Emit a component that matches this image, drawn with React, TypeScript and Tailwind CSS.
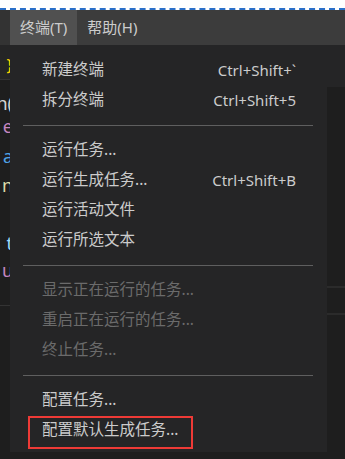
import React from "react";

type Item =
  | { type: "item"; label: string; shortcut?: string; disabled?: boolean; boxed?: boolean }
  | { type: "sep" };

const items: Item[] = [
  { type: "item", label: "新建终端", shortcut: "Ctrl+Shift+`" },
  { type: "item", label: "拆分终端", shortcut: "Ctrl+Shift+5" },
  { type: "sep" },
  { type: "item", label: "运行任务..." },
  { type: "item", label: "运行生成任务...", shortcut: "Ctrl+Shift+B" },
  { type: "item", label: "运行活动文件" },
  { type: "item", label: "运行所选文本" },
  { type: "sep" },
  { type: "item", label: "显示正在运行的任务...", disabled: true },
  { type: "item", label: "重启正在运行的任务...", disabled: true },
  { type: "item", label: "终止任务...", disabled: true },
  { type: "sep" },
  { type: "item", label: "配置任务..." },
  { type: "item", label: "配置默认生成任务...", boxed: true },
];

// editor glyphs peeking out on the left
const codeBits = [
  { ch: "n(", color: "text-[#d4d4d4]", mt: "mt-[12px]" },
  { ch: "e", color: "text-[#c586c0]", mt: "mt-[1px]" },
  { ch: "a", color: "text-[#4fa3e8]", mt: "mt-[8px]" },
  { ch: "n", color: "text-[#dcdcaa]", mt: "mt-[7px]" },
  { ch: "t", color: "text-[#9cdcfe]", mt: "mt-[36px]" },
  { ch: "u", color: "text-[#c586c0]", mt: "mt-[5px]" },
];

export default function App() {
  return (
    <div
      className="w-[345px] h-[459px] overflow-hidden bg-[#1e1e1e] flex flex-col"
      style={{ fontFamily: '"Segoe UI", "Noto Sans", "Noto Sans CJK SC", sans-serif' }}
    >
      {/* top strip */}
      <div className="h-[10px] shrink-0 bg-white border-b-2 border-dashed border-[#2a6fc9]" />

      {/* menu bar */}
      <div className="h-[35px] shrink-0 flex bg-[#3c3c3c] text-[15px] text-[#cccccc]">
        <div className="w-[10px] bg-[#333333]" />
        <div className="flex items-center px-[10px] bg-[#505050]">终端(T)</div>
        <div className="flex items-center px-[10px]">帮助(H)</div>
      </div>

      <div className="flex flex-1 min-h-0">
        {/* editor edge */}
        <div className="w-[10px] shrink-0 flex flex-col overflow-hidden">
          <div className="h-[34px] bg-[#252526] flex flex-col items-end">
            <span className="text-[17px] leading-[20px] mt-[10px] -mr-[3px] text-[#ffd700]">{"}"}</span>
          </div>
          <div className="h-[1px] bg-[#333333]" />
          {codeBits.map((b, i) => (
            <div key={i} className={`flex justify-end ${b.mt}`}>
              <span className={`text-[18px] leading-[22px] -mr-[3px] ${b.color}`}>{b.ch}</span>
            </div>
          ))}
          <div className="mt-[24px] h-[1px] bg-[#333333]" />
        </div>

        {/* dropdown */}
        <div className="w-[317px] shrink-0 h-[407px] bg-[#252526] pt-[10px] pb-[7px]">
          {items.map((it, i) =>
            it.type === "sep" ? (
              <div key={i} className="h-[20px] flex items-center pl-[13px] pr-[14px]">
                <div className="h-[1px] w-full bg-[#5f5f5f]" />
              </div>
            ) : (
              <div
                key={i}
                className={`relative h-[30px] flex items-center justify-between pl-[32px] pr-[31px] ${
                  it.disabled ? "text-[#6b6b6b]" : "text-[#cccccc]"
                }`}
              >
                <span className="text-[15.5px]">{it.label}</span>
                {it.shortcut && <span className="text-[15px]">{it.shortcut}</span>}
                {it.boxed && (
                  <div className="absolute left-[18px] top-[1px] w-[165px] h-[33px] border-2 border-[#ee3a36]" />
                )}
              </div>
            )
          )}
        </div>

        {/* right side */}
        <div className="flex-1 flex flex-col">
          <div className="h-[42px] bg-[#252526]" />
          <div className="h-[199px]" />
          <div className="h-[2px] bg-[#2b2b2b]" />
          <div className="h-[25px]" />
          <div className="h-[2px] bg-[#2b2b2b]" />
        </div>
      </div>
    </div>
  );
}
